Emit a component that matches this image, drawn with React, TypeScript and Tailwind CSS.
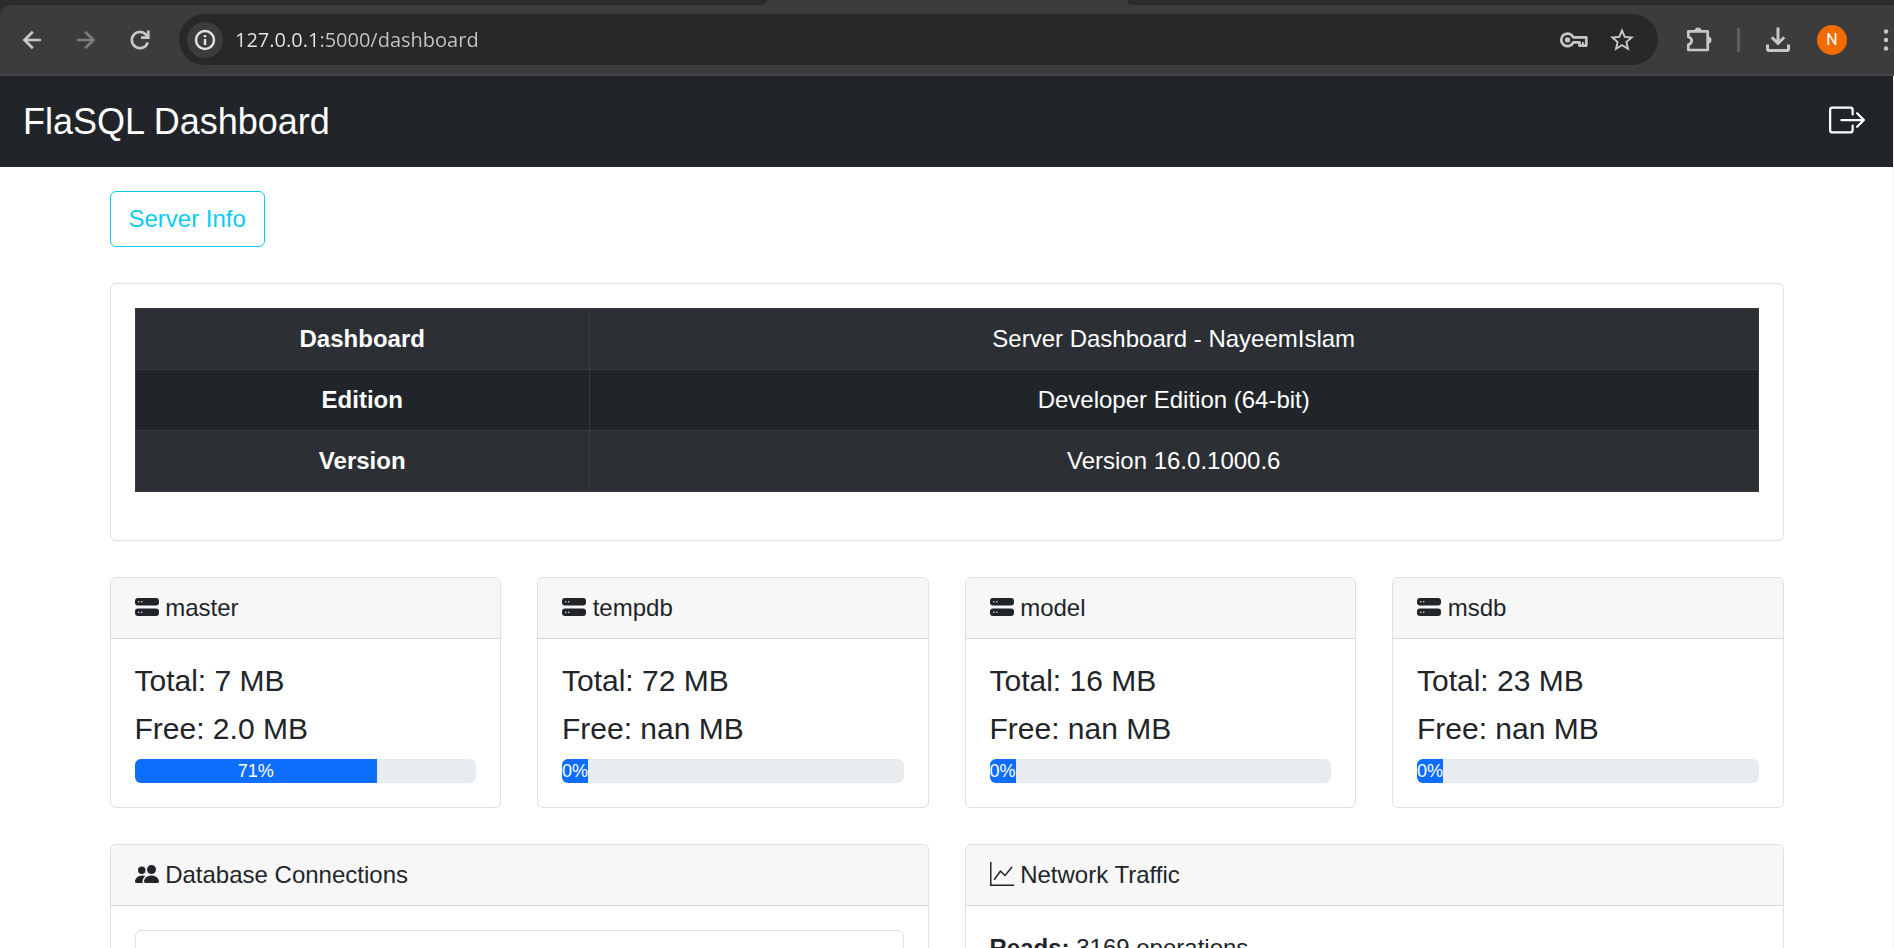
import { useState } from "react";
import type { ReactNode } from "react";
import { BsBoxArrowRight, BsGraphUp, BsHddStackFill, BsPeopleFill } from "react-icons/bs";

const serverInfo = [
  { label: "Dashboard", value: "Server Dashboard - NayeemIslam" },
  { label: "Edition", value: "Developer Edition (64-bit)" },
  { label: "Version", value: "Version 16.0.1000.6" },
];

const databases = [
  { name: "master", total: "7 MB", free: "2.0 MB", used: 71 },
  { name: "tempdb", total: "72 MB", free: "nan MB", used: 0 },
  { name: "model", total: "16 MB", free: "nan MB", used: 0 },
  { name: "msdb", total: "23 MB", free: "nan MB", used: 0 },
];

function ToolbarIcon({ label, dim = false, children }: { label: string; dim?: boolean; children: ReactNode }) {
  return (
    <button
      type="button"
      aria-label={label}
      disabled={dim}
      className={`flex size-[30px] shrink-0 items-center justify-center ${dim ? "text-[#7c7c7c]" : "text-[#c7c7c7]"}`}
    >
      <svg viewBox="0 0 30 30" className="size-[30px]" fill="none" stroke="currentColor" strokeWidth="2.7">
        {children}
      </svg>
    </button>
  );
}

function BrowserBar() {
  const [url, setUrl] = useState("127.0.0.1:5000/dashboard");
  return (
    <header className="bg-[#3c3c3c]">
      <div className="flex h-[5px]">
        <div className="w-[40.5%] rounded-br-[10px] bg-[#2b2b2b]" />
        <div className="w-[19%]" />
        <div className="grow rounded-bl-[10px] bg-[#2b2b2b]" />
      </div>
      <div className="bg-[#2b2b2b]">
        <div className="flex h-[71px] items-center rounded-tl-[12px] border-b-2 border-[#474747] bg-[#3c3c3c] pl-[17px]">
          <div className="flex gap-6">
            <ToolbarIcon label="Back">
              <path d="M24 15H7.500M15.800 6.700L7.500 15l8.300 8.300" />
            </ToolbarIcon>
            <ToolbarIcon label="Forward" dim>
              <path d="M6 15h16.500M14.200 6.700L22.500 15l-8.300 8.300" />
            </ToolbarIcon>
            <ToolbarIcon label="Reload">
              <path d="M22.700 17.300A8.100 8.100 0 1 1 20.800 9.500L23 12" />
              <path d="M23.300 5.500v7.200H16" />
            </ToolbarIcon>
          </div>
          <div className="ml-6 flex h-[51px] grow items-center rounded-full bg-[#282828] pr-[21px] pl-2">
            <button
              type="button"
              aria-label="View site information"
              className="flex size-9 shrink-0 items-center justify-center rounded-full bg-[#3c3c3c] text-[#e3e3e3]"
            >
              <svg viewBox="0 0 24 24" className="size-6" fill="none" stroke="currentColor" strokeWidth="2.400">
                <circle cx="12" cy="12" r="9" />
                <path d="M12 11v6M12 7v2.300" />
              </svg>
            </button>
            <input
              aria-label="Address"
              value={url}
              onChange={(e) => setUrl(e.target.value)}
              className="ml-3 min-w-0 grow bg-[linear-gradient(90deg,#e8e8e8_80px,#c7c7c7_80px)] bg-clip-text font-['Open_Sans',sans-serif] text-[20px] text-transparent caret-white outline-none"
            />
            <div className="flex gap-[18px]">
              <ToolbarIcon label="Passwords">
                <path d="M14.300 12.400H27.300V20.600H20.500V17.400H14.300A6.300 6.300 0 1 1 14.300 12.400Z" strokeLinejoin="round" />
                <circle cx="8.500" cy="14.900" r="2.700" fill="currentColor" stroke="none" />
                <path d="M23.900 17v4" strokeWidth="1.800" />
              </ToolbarIcon>
              <ToolbarIcon label="Bookmark this tab">
                <path
                  transform="translate(.6 .6) scale(1.2)"
                  fill="currentColor"
                  stroke="none"
                  d="M22 9.240l-7.190-.62L12 2 9.190 8.630 2 9.240l5.460 4.730L5.820 21 12 17.270 18.180 21l-1.630-7.030L22 9.240zM12 15.400l-3.760 2.270 1-4.280-3.320-2.880 4.380-.38L12 6.100l1.710 4.040 4.380.38-3.320 2.880 1 4.280L12 15.400z"
                />
              </ToolbarIcon>
            </div>
          </div>
          <div className="mr-[-7px] ml-[26px] flex shrink-0 items-center">
            <ToolbarIcon label="Extensions">
              <path d="M4.300 6.300H23.700V25H4.300V19.500C8.800 18.500 8.800 13 4.300 12Z" strokeLinejoin="round" />
              <path d="M10.500 6a3.500 3.500 0 0 1 7 0ZM24 11.500a3.500 3.500 0 0 1 0 7Z" fill="currentColor" stroke="none" />
            </ToolbarIcon>
            <div className="mx-[23px] h-6 w-[3px] bg-[#5f5f5f]" />
            <ToolbarIcon label="Downloads">
              <path d="M15 2.500v16M8.800 12.300L15 18.500l6.200-6.200" strokeWidth="3" />
              <path d="M4.500 19.500V24a1.500 1.500 0 0 0 1.500 1.500H24a1.500 1.500 0 0 0 1.500-1.500V19.500" strokeWidth="3" />
            </ToolbarIcon>
            <button
              type="button"
              aria-label="Profile"
              className="mx-6 flex size-[30px] items-center justify-center rounded-full bg-[#ef6c00] font-[Roboto,sans-serif] text-base text-white"
            >
              N
            </button>
            <ToolbarIcon label="Menu">
              <g fill="currentColor" stroke="none">
                <circle cx="15" cy="6.500" r="2.200" />
                <circle cx="15" cy="15" r="2.200" />
                <circle cx="15" cy="23.500" r="2.200" />
              </g>
            </ToolbarIcon>
          </div>
        </div>
      </div>
    </header>
  );
}

function Card({ icon, title, children }: { icon: ReactNode; title: string; children: ReactNode }) {
  return (
    <section className="rounded-md border border-[#dfdfdf] bg-white">
      <h2 className="rounded-t-md border-b border-[#d8d8d8] bg-[#f7f7f7] px-6 py-3">
        {icon} {title}
      </h2>
      <div className="p-6">{children}</div>
    </section>
  );
}

export default function App() {
  const [showInfo, setShowInfo] = useState(true);
  return (
    <div className="flex h-screen flex-col overflow-hidden bg-white font-['Liberation_Sans',Arial,sans-serif] text-2xl leading-9 text-[#212529]">
      <BrowserBar />
      <div className="min-h-0 grow overflow-hidden border-r border-[#f1f1f1]">
        <nav className="flex items-center justify-between bg-[#212529] py-[18px] pr-7 pl-[23px] text-white">
          <h1 className="text-4xl leading-[55px]">FlaSQL Dashboard</h1>
          <a href="#logout" aria-label="Log out" className="pb-[3px]">
            <BsBoxArrowRight className="size-9" />
          </a>
        </nav>
        <main className="mx-auto flex max-w-[1710px] flex-col gap-9 px-[18px] pt-6">
          <button
            type="button"
            onClick={() => setShowInfo(!showInfo)}
            className="self-start rounded-md border border-[#0dcaf0] px-[18px] py-[9px] text-[#0dcaf0]"
          >
            Server Info
          </button>
          {showInfo && (
            <section className="rounded-md border border-[#dfdfdf] p-6">
              <table className="mb-6 w-full table-fixed border-collapse text-center text-white">
                <tbody>
                  {serverInfo.map((row) => (
                    <tr key={row.label} className="bg-[#212529] odd:bg-[#2c3034]">
                      <th scope="row" className="w-[28%] border border-[#373b3e] p-3 font-bold">
                        {row.label}
                      </th>
                      <td className="border border-[#373b3e] p-3">{row.value}</td>
                    </tr>
                  ))}
                </tbody>
              </table>
            </section>
          )}
          <div className="grid grid-cols-4 gap-9">
            {databases.map((db) => (
              <Card key={db.name} title={db.name} icon={<BsHddStackFill className="inline size-6 align-[-3px]" />}>
                <p className="mb-3 text-3xl leading-9">Total: {db.total}</p>
                <p className="mb-3 text-3xl leading-9">Free: {db.free}</p>
                <div className="flex h-6 overflow-hidden rounded-md bg-[#e9ecef] text-lg leading-6">
                  <div
                    role="progressbar"
                    aria-label={`${db.name} used space`}
                    aria-valuenow={db.used}
                    className="min-w-fit bg-[#0d6efd] text-center text-white"
                    style={{ width: `${db.used}%` }}
                  >
                    {db.used}%
                  </div>
                </div>
              </Card>
            ))}
          </div>
          <div className="grid grid-cols-2 gap-9">
            <Card title="Database Connections" icon={<BsPeopleFill className="inline size-6 align-[-3px]" />}>
              <div className="h-40 rounded-md border border-[#dfdfdf]" />
            </Card>
            <Card title="Network Traffic" icon={<BsGraphUp className="inline size-6 align-[-3px]" />}>
              <p>
                <strong>Reads:</strong> 3169 operations
              </p>
            </Card>
          </div>
        </main>
      </div>
    </div>
  );
}
